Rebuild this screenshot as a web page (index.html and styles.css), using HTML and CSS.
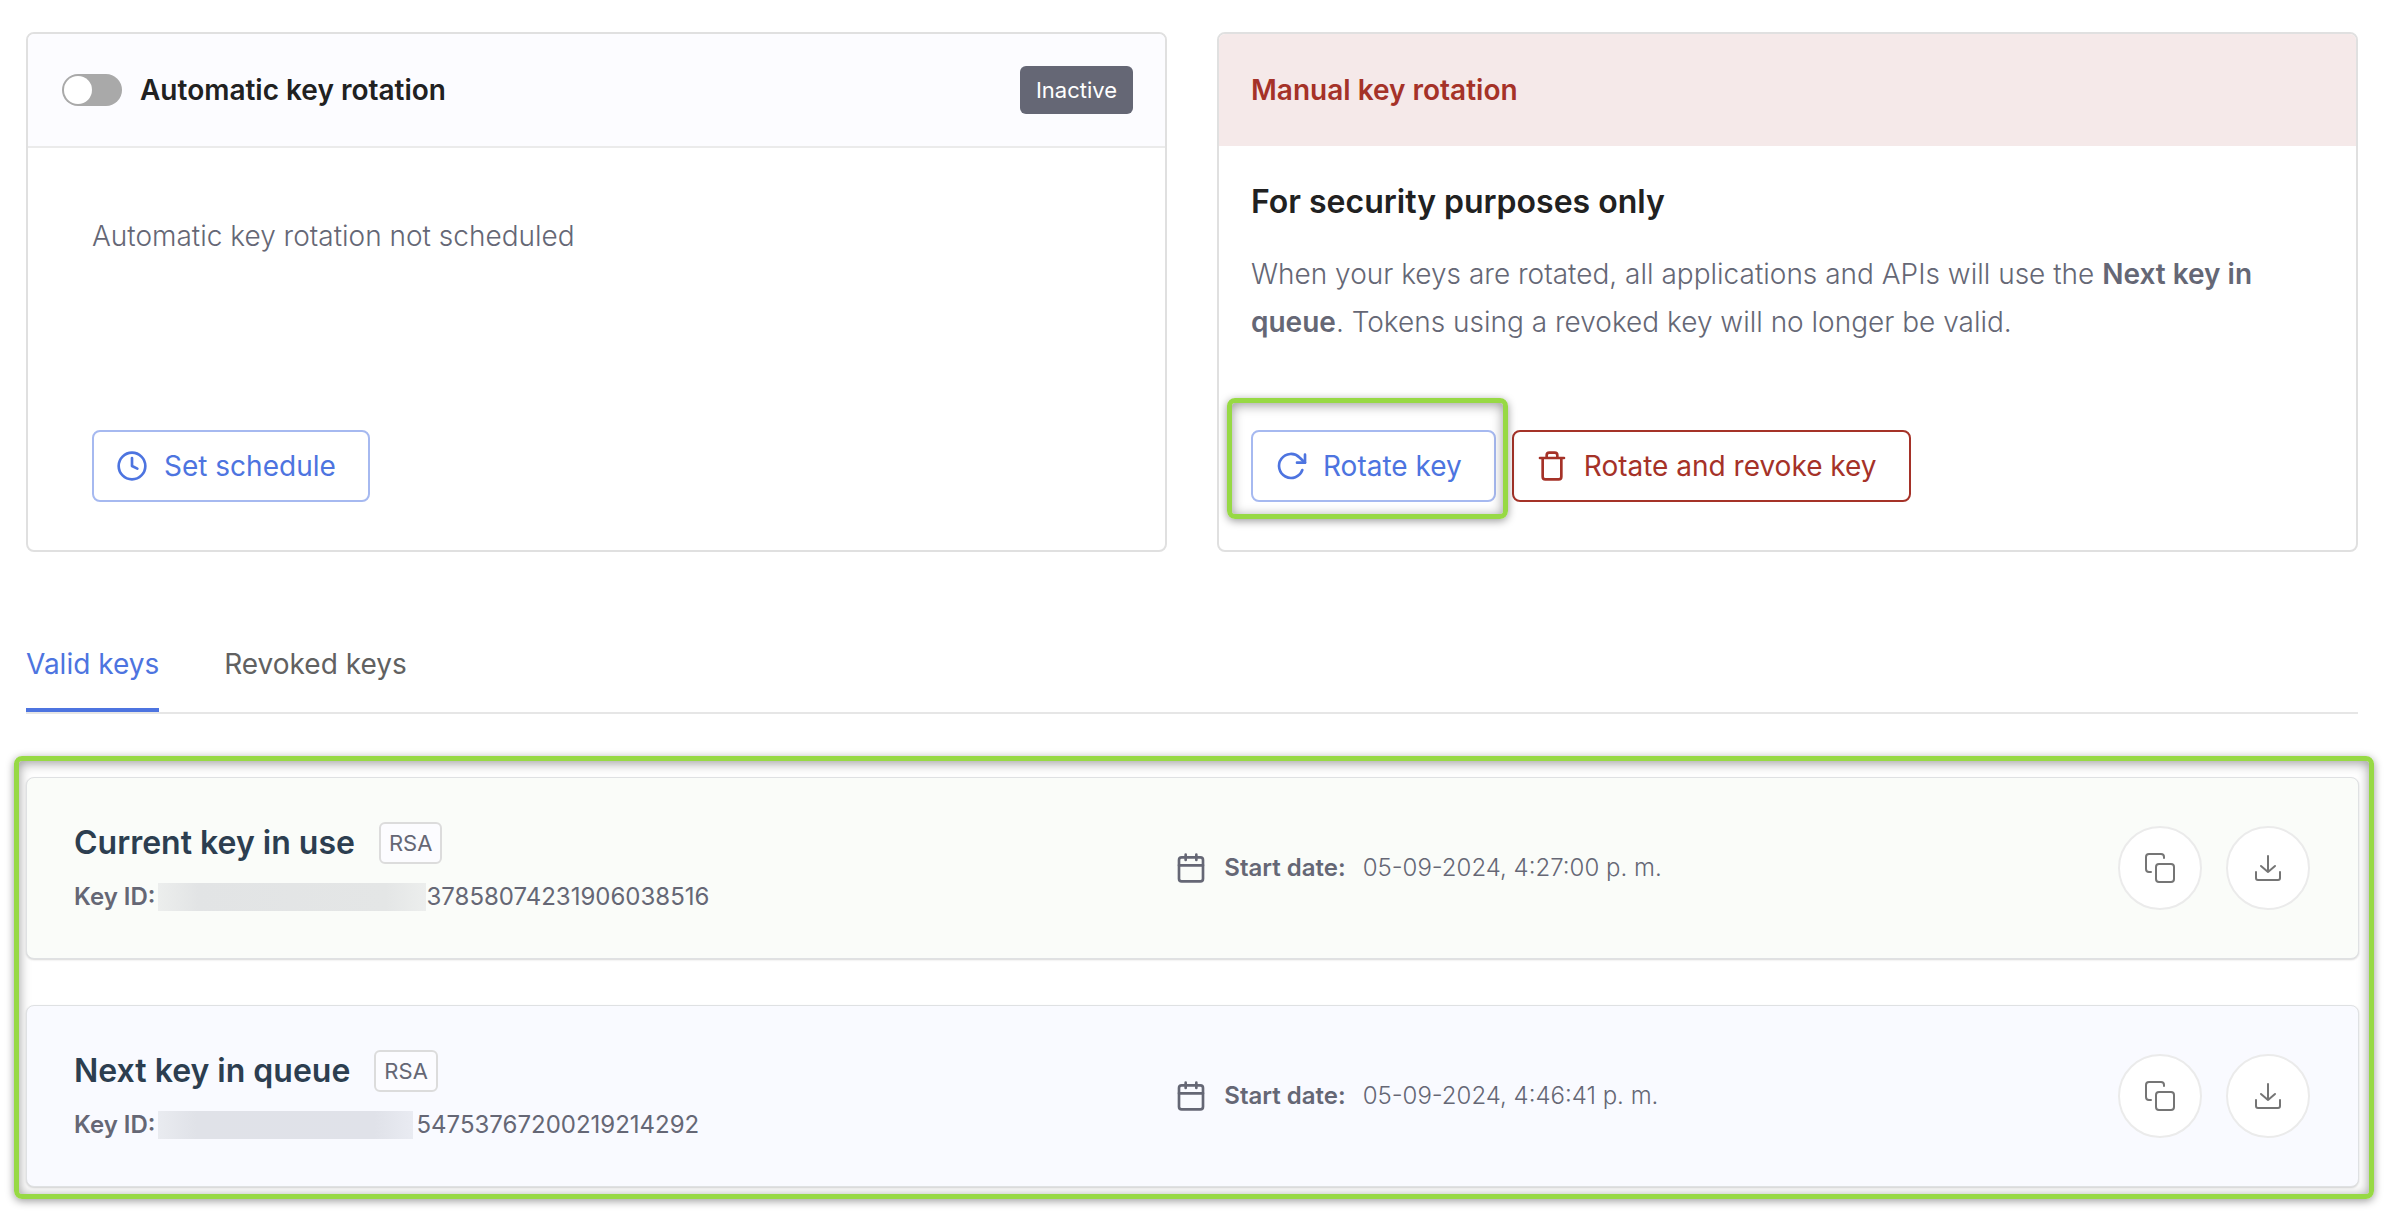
FILE: index.html
```html
<!DOCTYPE html>
<html lang="en">
<head>
<meta charset="utf-8">
<title>Signing keys</title>
<meta name="viewport" content="width=device-width, initial-scale=1">
<link rel="stylesheet" href="styles.css">
</head>
<body>
<svg class="sprite" aria-hidden="true">
  <symbol id="clock" viewBox="0 0 24 24"><circle cx="12" cy="12" r="10"/><path d="M12 6v6l4 2"/></symbol>
  <symbol id="rotate" viewBox="0 0 24 24"><path d="M20.5 15a9 9 0 1 1-2.1-9.400L22.500 9.500"/><path d="M22.500 3.500v6h-6"/></symbol>
  <symbol id="trash" viewBox="0 0 24 24"><path d="M3 6h18M19 6v14a2 2 0 0 1-2 2H7a2 2 0 0 1-2-2V6M8 6V4a2 2 0 0 1 2-2h4a2 2 0 0 1 2 2v2"/></symbol>
  <symbol id="calendar" viewBox="0 0 24 24"><rect x="3" y="4" width="18" height="18" rx="2"/><path d="M8 2v4M16 2v4M3 10h18"/></symbol>
  <symbol id="copy" viewBox="0 0 32 32"><rect x="12" y="12" width="18" height="18" rx="3"/><path d="M7 20H5a3 3 0 0 1-3-3V5a3 3 0 0 1 3-3h12a3 3 0 0 1 3 3v1"/></symbol>
  <symbol id="download" viewBox="0 0 32 32"><path d="M4 20v6a2 2 0 0 0 2 2h20a2 2 0 0 0 2-2v-6M9 14l7 6 7-6M16 4v16"/></symbol>
</svg>
<main class="page">
  <section class="rotation">
    <article class="card">
      <header class="card-head card-head-auto">
        <input class="toggle" type="checkbox" role="switch" id="auto-rotation">
        <label class="card-title" for="auto-rotation">Automatic key rotation</label>
        <span class="status">Inactive</span>
      </header>
      <div class="card-body card-body-auto">
        <p class="copy">Automatic key rotation not scheduled</p>
        <div class="actions">
          <button class="btn" type="button"><svg class="icon"><use href="#clock"/></svg>Set schedule</button>
        </div>
      </div>
    </article>
    <article class="card">
      <header class="card-head card-head-manual"><h2 class="card-title">Manual key rotation</h2></header>
      <div class="card-body">
        <h3 class="heading">For security purposes only</h3>
        <p class="copy copy-long">When your keys are rotated, all applications and APIs will use the <strong>Next key in queue</strong>. Tokens using a revoked key will no longer be valid.</p>
        <div class="actions">
          <div class="marked"><button class="btn" type="button"><svg class="icon"><use href="#rotate"/></svg>Rotate key</button></div>
          <button class="btn btn-danger" type="button"><svg class="icon"><use href="#trash"/></svg>Rotate and revoke key</button>
        </div>
      </div>
    </article>
  </section>

  <nav class="tabs">
    <a class="tab tab-active" href="#valid">Valid keys</a>
    <a class="tab" href="#revoked">Revoked keys</a>
  </nav>

  <section class="keys" id="valid">
    <article class="key key-current">
      <div class="key-info">
        <div class="key-head"><h3 class="key-name">Current key in use</h3><span class="tag">RSA</span></div>
        <p class="key-id"><strong>Key ID:</strong><span class="redacted"></span>37858074231906038516</p>
      </div>
      <div class="key-side">
        <p class="date"><svg class="icon"><use href="#calendar"/></svg><strong>Start date:</strong><span>05-09-2024, 4:27:00 p. m.</span></p>
        <div class="key-actions">
          <button class="round" type="button" aria-label="Copy key"><svg class="icon"><use href="#copy"/></svg></button>
          <button class="round" type="button" aria-label="Download key"><svg class="icon"><use href="#download"/></svg></button>
        </div>
      </div>
    </article>
    <article class="key key-next">
      <div class="key-info">
        <div class="key-head"><h3 class="key-name">Next key in queue</h3><span class="tag">RSA</span></div>
        <p class="key-id"><strong>Key ID:</strong><span class="redacted redacted-next"></span>54753767200219214292</p>
      </div>
      <div class="key-side">
        <p class="date"><svg class="icon"><use href="#calendar"/></svg><strong>Start date:</strong><span>05-09-2024, 4:46:41 p. m.</span></p>
        <div class="key-actions">
          <button class="round" type="button" aria-label="Copy key"><svg class="icon"><use href="#copy"/></svg></button>
          <button class="round" type="button" aria-label="Download key"><svg class="icon"><use href="#download"/></svg></button>
        </div>
      </div>
    </article>
  </section>
</main>
</body>
</html>
```
FILE: styles.css
```css
*, *::before, *::after { box-sizing: border-box; }
body {
  margin: 0;
  background: #fff;
  color: #65676e;
  font: 400 28px/48px Inter, "Open Sans", sans-serif;
}
h2, h3, p { margin: 0; }
button { font: inherit; cursor: pointer; }
.sprite { display: none; }
.page { padding: 32px 31px 20px 26px; }

.icon {
  width: 32px;
  height: 32px;
  flex: none;
  fill: none;
  stroke: currentColor;
  stroke-width: 2;
  stroke-linecap: round;
  stroke-linejoin: round;
}

/* Rotation cards */
.rotation {
  display: grid;
  grid-template-columns: 1fr 1fr;
  gap: 50px;
}
.card {
  display: flex;
  flex-direction: column;
  min-height: 520px;
  border: 2px solid #e0e0e0;
  border-radius: 8px;
  overflow: hidden;
}
.card-head {
  display: flex;
  align-items: center;
  padding: 0 32px;
  height: 112px;
}
.card-head-auto {
  height: 114px;
  padding-left: 34px;
  padding-bottom: 2px;
  background: #fcfcff;
  box-shadow: inset 0 -2px #ebebeb;
}
.card-head-manual { background: #f5e9e9; color: #a53228; }
.card-title { font-size: 28px; line-height: 48px; font-weight: 600; }
.card-head-auto .card-title { color: #212121; }
.toggle {
  appearance: none;
  display: flex;
  width: 60px;
  height: 32px;
  margin: 0 18px 0 0;
  padding: 2px;
  border-radius: 16px;
  background: #a9a9a9;
}
.toggle::before {
  content: "";
  width: 28px;
  height: 28px;
  border-radius: 50%;
  background: #fff;
}
.status {
  margin-left: auto;
  padding: 0 16px;
  border-radius: 6px;
  background: #656775;
  color: #fff;
  font-size: 22px;
}
.card-body {
  display: flex;
  flex: 1;
  flex-direction: column;
  padding: 32px 32px 48px;
}
.card-body-auto { padding: 64px 64px 48px; }
.heading { font-size: 32px; line-height: 48px; font-weight: 600; color: #212121; }
.copy { color: #656775; font-weight: 300; }
.copy-long { margin-top: 24px; }
.copy strong { font-weight: 600; }
.actions { display: flex; gap: 16px; margin-top: auto; }
.btn {
  display: flex;
  align-items: center;
  gap: 16px;
  height: 72px;
  padding: 0 32px 0 22px;
  border: 2px solid #a6b9f0;
  border-radius: 8px;
  background: #fff;
  color: #4d74e0;
}
.btn-danger { border-color: #a53228; color: #a53228; }

/* Callout frames */
.marked { position: relative; }
.marked::after {
  content: "";
  position: absolute;
  inset: -32px -12px -17px -24px;
}
.marked::after, .keys {
  border: 5px solid #97d944;
  border-radius: 8px;
  box-shadow: 0 2px 8px rgba(0, 0, 0, .4), inset 0 2px 12px rgba(0, 0, 0, .4);
  pointer-events: none;
}

/* Tabs */
.tabs {
  display: flex;
  gap: 65px;
  margin-top: 88px;
  border-bottom: 2px solid #e6e6e6;
}
.tab {
  padding-bottom: 20px;
  border-bottom: 4px solid transparent;
  color: #616161;
  text-decoration: none;
}
.tab-active { border-color: #4d74e0; color: #4d74e0; }

/* Key list */
.keys {
  display: flex;
  flex-direction: column;
  gap: 46px;
  margin: 42px -16px 0 -12px;
  padding: 16px 10px 7px 7px;
}
.key {
  display: grid;
  grid-template-columns: 33fr 34fr;
  align-items: center;
  min-height: 182px;
  padding: 0 48px 0 47px;
  border: 1px solid #dfe1e3;
  border-radius: 8px;
  box-shadow: 0 1px 2px rgba(0, 0, 0, .16);
  font-size: 24px;
  line-height: 40px;
  pointer-events: auto;
}
.key-current { background: #fafcf9; }
.key-next { background: #f9faff; }
.key strong { font-weight: 600; }
.key-head { display: flex; align-items: center; gap: 24px; }
.key-name { font-size: 32px; line-height: 48px; font-weight: 600; color: #2c3e50; }
.tag {
  height: 42px;
  padding: 0 8px;
  border: 2px solid #dcdcdc;
  border-radius: 6px;
  background: #fcfcff;
  color: #656775;
  font-size: 22px;
  line-height: 38px;
}
.key-id, .date { color: #656775; }
.key-id { display: flex; align-items: center; margin-top: 10px; }
.redacted {
  width: 268px;
  height: 28px;
  margin-left: 3px;
  background: linear-gradient(90deg, #eceeed, #e2e4e5 15%, #e4e6e6 85%, #eceeed);
}
.redacted-next {
  width: 255px;
  margin-right: 3px;
  background: linear-gradient(90deg, #e9ebf0, #e0e2e8 15%, #e0e2e9 85%, #e9ebf2);
}
.key-side { display: flex; align-items: center; justify-content: space-between; }
.date { display: flex; align-items: center; gap: 17px; }
.date span { font-weight: 300; }
.key-actions { display: flex; gap: 24px; }
.round {
  display: grid;
  place-items: center;
  width: 84px;
  height: 84px;
  padding: 0;
  border: 2px solid #ebebeb;
  border-radius: 50%;
  background: #fff;
  color: #757575;
}
```
